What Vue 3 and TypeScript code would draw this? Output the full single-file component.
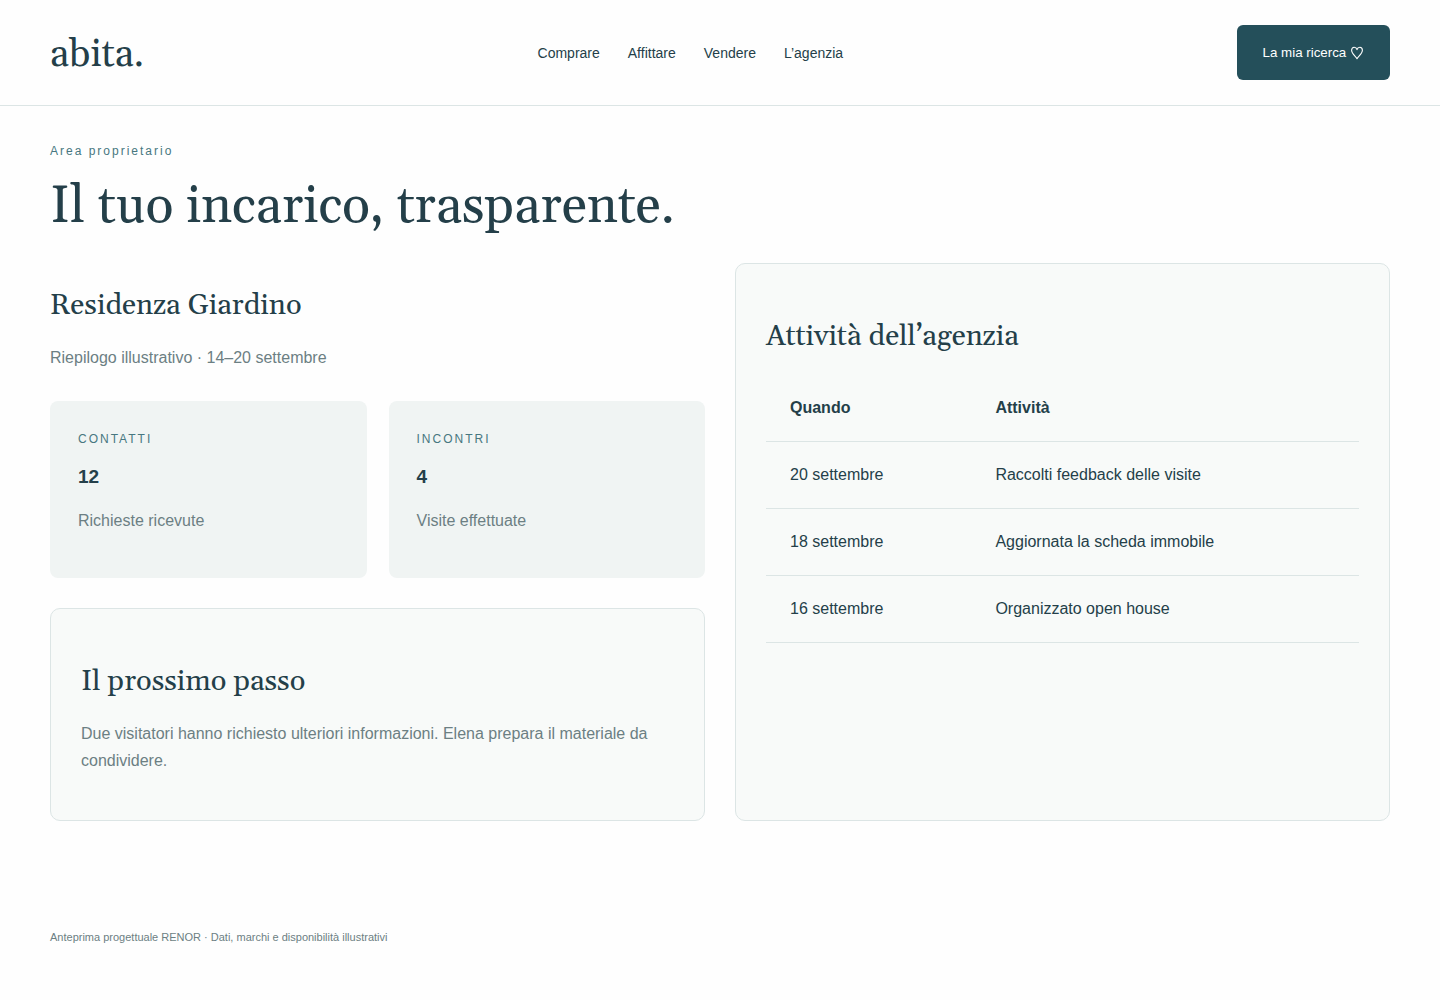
<script setup lang="ts">
interface Stat {
  label: string
  value: number
  note: string
}

interface Activity {
  when: string
  what: string
}

const links: string[] = ['Comprare', 'Affittare', 'Vendere', 'L’agenzia']

const stats: Stat[] = [
  { label: 'Contatti', value: 12, note: 'Richieste ricevute' },
  { label: 'Incontri', value: 4, note: 'Visite effettuate' },
]

const activities: Activity[] = [
  { when: '20 settembre', what: 'Raccolti feedback delle visite' },
  { when: '18 settembre', what: 'Aggiornata la scheda immobile' },
  { when: '16 settembre', what: 'Organizzato open house' },
]
</script>

<template>
  <div class="page">
    <header class="header">
      <a class="logo" href="#">abita.</a>
      <nav class="nav">
        <a v-for="link in links" :key="link" href="#">{{ link }}</a>
      </nav>
      <button class="search" type="button">
        La mia ricerca
        <svg class="heart" viewBox="0 0 14 14" aria-hidden="true">
          <path
            d="M7 12.7C6.2 10.6 1.6 7.9 1.6 4.3C1.6 2.4 2.7 1.2 4.2 1.2C5.6 1.2 6.6 2.1 7 3.6C7.4 2.1 8.4 1.2 9.8 1.2C11.3 1.2 12.4 2.4 12.4 4.3C12.4 7.9 7.8 10.6 7 12.7Z"
            fill="none"
            stroke="currentColor"
            stroke-width="1.1"
            stroke-linejoin="round"
          />
        </svg>
      </button>
    </header>

    <main class="main">
      <p class="eyebrow">Area proprietario</p>
      <h1>Il tuo incarico, trasparente.</h1>

      <div class="columns">
        <section>
          <h2>Residenza Giardino</h2>
          <p class="summary">Riepilogo illustrativo · 14–20 settembre</p>
          <div class="stats">
            <article v-for="stat in stats" :key="stat.label" class="stat">
              <p class="eyebrow upper">{{ stat.label }}</p>
              <h3>{{ stat.value }}</h3>
              <p>{{ stat.note }}</p>
            </article>
          </div>
          <div class="card">
            <h2>Il prossimo passo</h2>
            <p>
              Due visitatori hanno richiesto ulteriori informazioni. Elena prepara il materiale da
              condividere.
            </p>
          </div>
        </section>

        <section class="card">
          <h2>Attività dell’agenzia</h2>
          <table>
            <thead>
              <tr>
                <th scope="col">Quando</th>
                <th scope="col">Attività</th>
              </tr>
            </thead>
            <tbody>
              <tr v-for="item in activities" :key="item.when">
                <td>{{ item.when }}</td>
                <td>{{ item.what }}</td>
              </tr>
            </tbody>
          </table>
        </section>
      </div>
    </main>

    <footer class="footer">Anteprima progettuale RENOR · Dati, marchi e disponibilità illustrativi</footer>
  </div>
</template>

<style>
body {
  margin: 0;
  background: #fefefe;
}
</style>

<style scoped>
.page {
  color: #243f49;
  font: 16px/27px "Liberation Sans", Arial, sans-serif;
}

.header {
  display: flex;
  align-items: center;
  justify-content: space-between;
  padding: 25px 50px;
  border-bottom: 1px solid #dce5e5;
}

.logo,
h1,
h2 {
  font-family: Georgia, Gelasio, "Liberation Serif", serif;
  font-weight: 400;
}

.logo {
  padding-top: 4px;
  color: inherit;
  font-size: 38px;
  line-height: 50px;
  text-decoration: none;
}

.nav {
  display: flex;
  gap: 28px;
  font-size: 14px;
  line-height: 28px;
}

.nav a {
  color: inherit;
  text-decoration: none;
}

.search {
  padding: 16px 26px;
  border: 0;
  border-radius: 6px;
  background: #244f5a;
  color: #fff;
  font-family: "Liberation Sans", Arial, sans-serif;
  line-height: 23px;
}

.heart {
  width: 14px;
  height: 14px;
  vertical-align: text-bottom;
}

.main {
  padding: 35px 50px 0;
}

p {
  margin: 0 0 16px;
  color: #6c7f83;
}

.eyebrow {
  margin: 0 0 12px;
  color: #477780;
  font-size: 12px;
  line-height: 20px;
  letter-spacing: 2px;
}

.upper {
  text-transform: uppercase;
}

h1 {
  margin: 16px 0 26px;
  font-size: 52px;
  line-height: 60px;
}

h2 {
  margin: 26px 0 22px;
  font-size: 29px;
  line-height: 33px;
}

h3 {
  margin: 0 0 14px;
  font-size: 19px;
  line-height: 32px;
}

.columns {
  display: grid;
  grid-template-columns: repeat(2, minmax(0, 1fr));
  gap: 30px;
}

.columns > section:first-child {
  display: flow-root;
}

.summary {
  margin-bottom: 30px;
}

.stats {
  display: grid;
  grid-template-columns: repeat(2, minmax(0, 1fr));
  gap: 22px;
  margin-bottom: 30px;
}

.stat {
  padding: 28px;
  border-radius: 8px;
  background: #f0f4f3;
}

.card {
  display: flow-root;
  padding: 30px;
  border: 1px solid #dce5e5;
  border-radius: 10px;
  background: #f8faf9;
}

table {
  width: 100%;
  border-collapse: separate;
  border-spacing: 0;
  line-height: 26px;
}

th,
td {
  padding: 20px 24px;
  border-bottom: 1px solid #dce5e5;
  text-align: left;
}

.footer {
  padding: 107px 50px 50px;
  color: #6c7f83;
  font-size: 11px;
  line-height: 19px;
}
</style>
